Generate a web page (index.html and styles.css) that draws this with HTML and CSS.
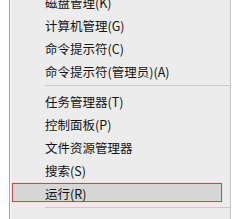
FILE: index.html
```html
<!DOCTYPE html>
<html lang="zh-CN">
<head>
    <meta charset="UTF-8">
    <link rel="stylesheet" href="styles.css">
    <title>Win+X</title>
</head>
<body>
  <div class="menu">
    <div class="item">磁盘管理(K)</div>
    <div class="item">计算机管理(G)</div>
    <div class="item">命令提示符(C)</div>
    <div class="item">命令提示符(管理员)(A)</div>
    <div class="sep"></div>
    <div class="item">任务管理器(T)</div>
    <div class="item">控制面板(P)</div>
    <div class="item">文件资源管理器</div>
    <div class="item">搜索(S)</div>
    <div class="item active">运行(R)</div>
    <div class="sep"></div>
  </div>
</body>
</html>
```

FILE: styles.css
```css
body {
  margin: 0;
  background-color: #fff;
  overflow: hidden;
  font-family: "Noto Sans CJK SC", "Noto Sans", sans-serif;
}

.menu {
  display: flex;
  flex-direction: column;
  margin: -10px 0 0 9px;
  width: 222px;
  height: 229px;
  box-sizing: border-box;
  background-color: #ececec;
  border-left: 1px solid #a4a4a4;
  border-right: 1px solid #c4c4c4;
  box-shadow: inset 1px 0 0 #f8f8f8;
}

.item {
  flex: none;
  height: 19px;
  line-height: 19px;
  margin: 2px 8px 2px 2px;
  padding-left: 32px;
  font-size: 12.5px;
  color: #141414;
  border: 1px solid transparent;
  box-sizing: border-box;
}

.item.active {
  background-color: #d6d6d6;
  border-color: #c0504d;
  box-shadow: 0 0 1px #eaa;
}

.sep {
  flex: none;
  height: 1px;
  margin: 3px 0 3px 35px;
  background-color: #c9c9c9;
}
```
